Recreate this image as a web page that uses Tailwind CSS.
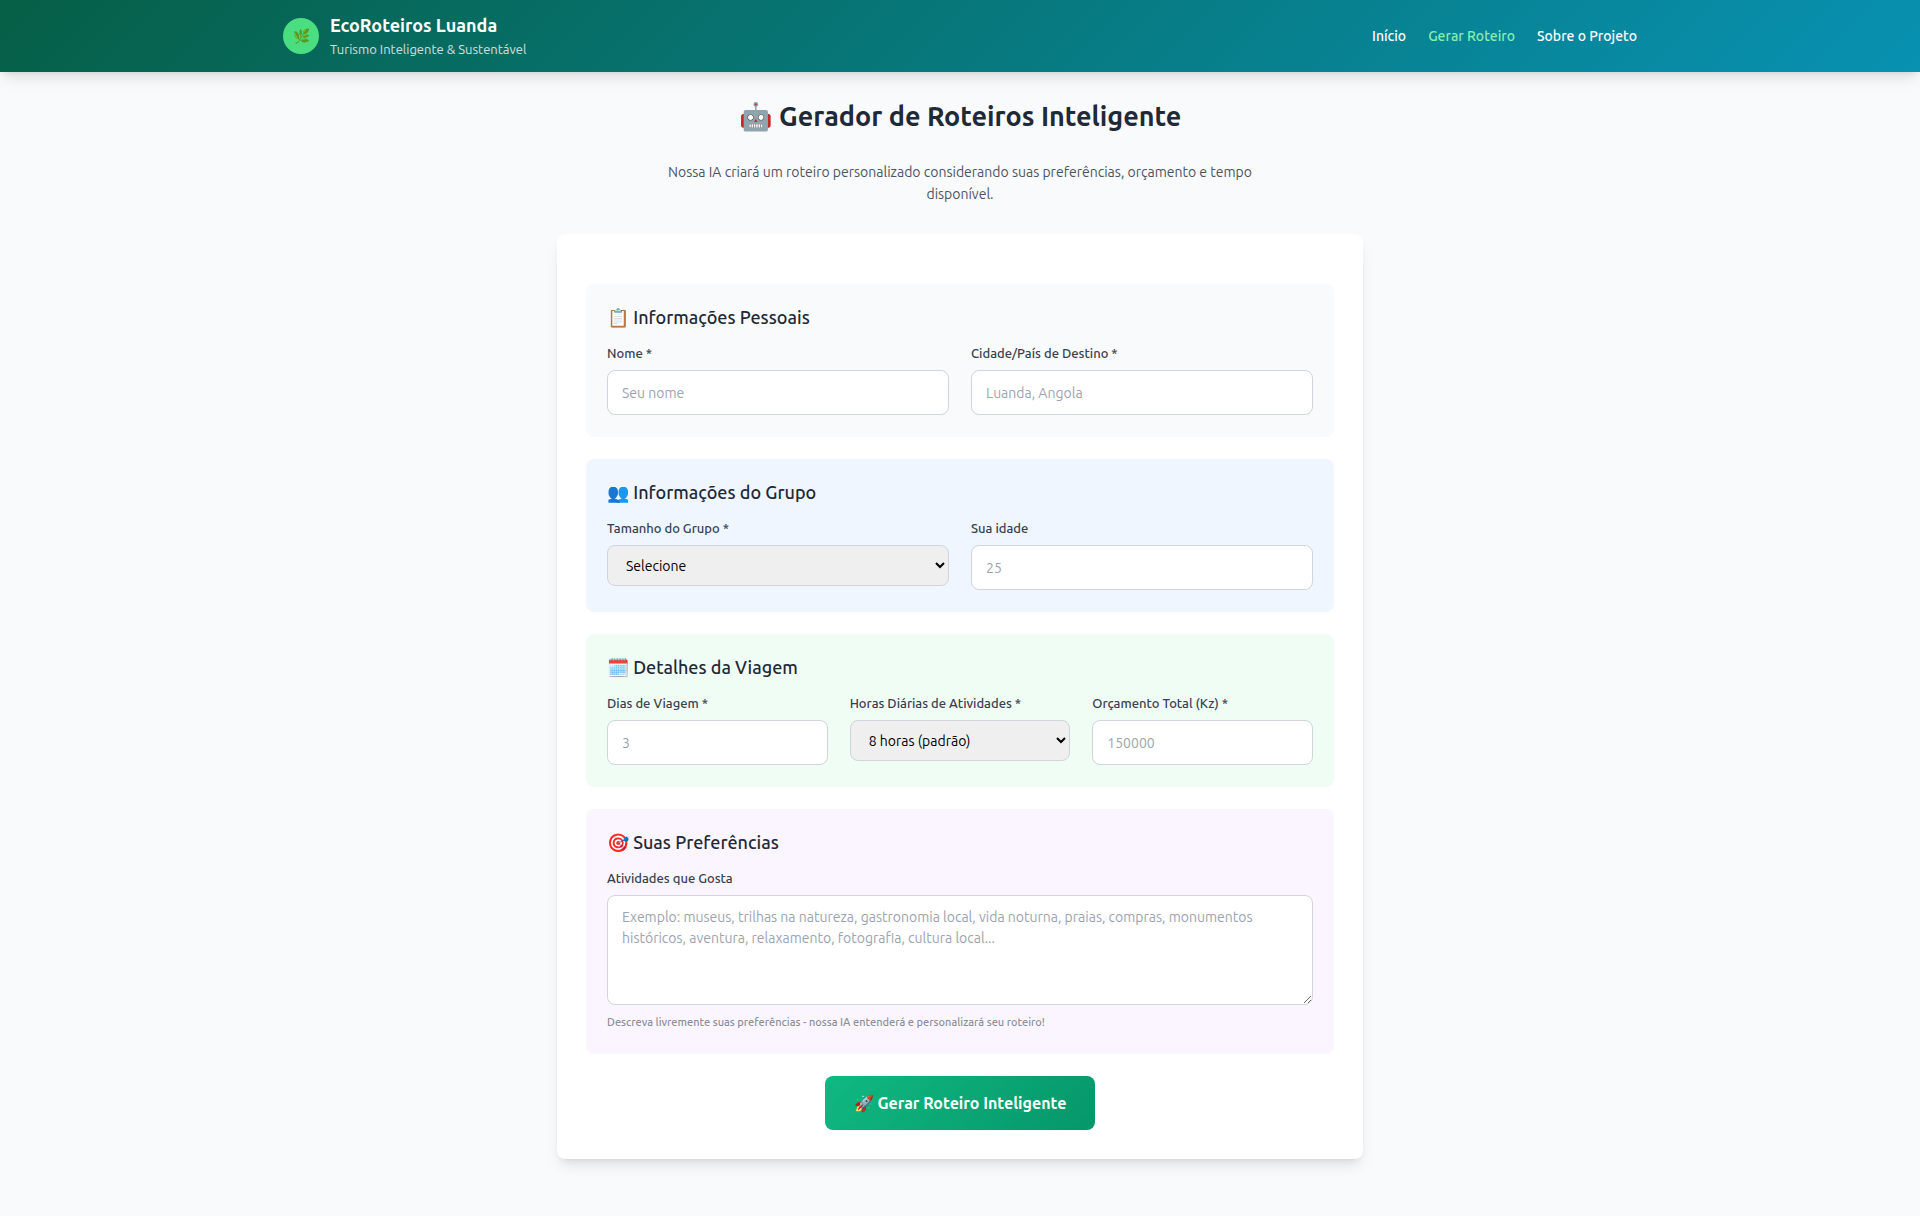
<!DOCTYPE html>
<html lang="pt">
<head>
<meta charset="utf-8">
<meta name="viewport" content="width=device-width, initial-scale=1">
<title>EcoRoteiros Luanda</title>
<script src="https://cdn.jsdelivr.net/npm/@tailwindcss/browser@4"></script>
</head>
<body class="min-h-screen bg-[#f9fafb] font-['Ubuntu','Noto_Sans',sans-serif] text-sm leading-[22px] text-[#1f2937]">
<header class="bg-[linear-gradient(135deg,#065f46,#0891b2)] text-white shadow-[0_9px_14px_-3px_rgba(0,0,0,0.1),0_4px_6px_-4px_rgba(0,0,0,0.1)]">
  <div class="mx-auto flex h-18 max-w-[1382px] items-center justify-between px-3.5">
    <div class="flex items-center gap-[11px]">
      <div class="flex size-9 items-center justify-center rounded-full bg-[#4ade80] text-sm">🌿</div>
      <div>
        <h1 class="text-lg leading-[25px] font-semibold">EcoRoteiros Luanda</h1>
        <p class="text-[13px] leading-[22px] opacity-80">Turismo Inteligente &amp; Sustentável</p>
      </div>
    </div>
    <nav class="flex gap-[22px] font-medium">
      <a href="#">Início</a>
      <a href="#" class="text-[#86efac]">Gerar Roteiro</a>
      <a href="#">Sobre o Projeto</a>
    </nav>
  </div>
</header>
<main class="mx-auto max-w-[834px] px-3.5 pt-7 pb-14">
  <div class="mb-[29px] text-center">
    <h2 class="mb-[29px] text-[27px] leading-8 font-semibold">🤖 Gerador de Roteiros Inteligente</h2>
    <p class="mx-auto max-w-[605px] text-[#4b5563]">Nossa IA criará um roteiro personalizado considerando suas preferências, orçamento e tempo disponível.</p>
  </div>
  <form class="flex flex-col gap-[22px] rounded-lg bg-white px-[29px] pt-[50px] pb-[29px] shadow-[0_9px_14px_-3px_rgba(0,0,0,0.1),0_4px_6px_-4px_rgba(0,0,0,0.1)]">
    <section class="rounded-lg bg-[#f9fafb] px-[21px] py-[22px]">
      <h3 class="mb-4 text-lg leading-[22px] font-medium">📋 Informações Pessoais</h3>
      <div class="grid grid-cols-2 items-start gap-[22px]">
        <div>
          <label for="nome" class="mb-2 block text-[13px] leading-[18px] font-medium text-[#374151]">Nome *</label>
          <input id="nome" type="text" placeholder="Seu nome" class="block h-[45px] w-full rounded-lg border border-[#d1d5db] bg-white px-3.5 placeholder:text-[#9ca3af]">
        </div>
        <div>
          <label for="destino" class="mb-2 block text-[13px] leading-[18px] font-medium text-[#374151]">Cidade/País de Destino *</label>
          <input id="destino" type="text" placeholder="Luanda, Angola" class="block h-[45px] w-full rounded-lg border border-[#d1d5db] bg-white px-3.5 placeholder:text-[#9ca3af]">
        </div>
      </div>
    </section>
    <section class="rounded-lg bg-[#eff6ff] px-[21px] py-[22px]">
      <h3 class="mb-4 text-lg leading-[22px] font-medium">👥 Informações do Grupo</h3>
      <div class="grid grid-cols-2 items-start gap-[22px]">
        <div>
          <label for="grupo" class="mb-2 block text-[13px] leading-[18px] font-medium text-[#374151]">Tamanho do Grupo *</label>
          <select id="grupo" class="block h-[41px] w-full rounded-lg border border-[#d1d5db] bg-[#efefef] px-3.5 text-black"><option>Selecione</option></select>
        </div>
        <div>
          <label for="idade" class="mb-2 block text-[13px] leading-[18px] font-medium text-[#374151]">Sua idade</label>
          <input id="idade" type="number" placeholder="25" class="block h-[45px] w-full rounded-lg border border-[#d1d5db] bg-white px-3.5 placeholder:text-[#9ca3af]">
        </div>
      </div>
    </section>
    <section class="rounded-lg bg-[#f0fdf4] px-[21px] py-[22px]">
      <h3 class="mb-4 text-lg leading-[22px] font-medium">🗓️ Detalhes da Viagem</h3>
      <div class="grid grid-cols-3 items-start gap-[22px]">
        <div>
          <label for="dias" class="mb-2 block text-[13px] leading-[18px] font-medium text-[#374151]">Dias de Viagem *</label>
          <input id="dias" type="number" placeholder="3" class="block h-[45px] w-full rounded-lg border border-[#d1d5db] bg-white px-3.5 placeholder:text-[#9ca3af]">
        </div>
        <div>
          <label for="horas" class="mb-2 block text-[13px] leading-[18px] font-medium text-[#374151]">Horas Diárias de Atividades *</label>
          <select id="horas" class="block h-[41px] w-full rounded-lg border border-[#d1d5db] bg-[#efefef] px-3.5 text-black"><option>8 horas (padrão)</option></select>
        </div>
        <div>
          <label for="orcamento" class="mb-2 block text-[13px] leading-[18px] font-medium text-[#374151]">Orçamento Total (Kz) *</label>
          <input id="orcamento" type="number" placeholder="150000" class="block h-[45px] w-full rounded-lg border border-[#d1d5db] bg-white px-3.5 placeholder:text-[#9ca3af]">
        </div>
      </div>
    </section>
    <section class="rounded-lg bg-[#faf5ff] px-[21px] py-[22px]">
      <h3 class="mb-4 text-lg leading-[22px] font-medium">🎯 Suas Preferências</h3>
      <label for="preferencias" class="mb-2 block text-[13px] leading-[18px] font-medium text-[#374151]">Atividades que Gosta</label>
      <textarea id="preferencias" placeholder="Exemplo: museus, trilhas na natureza, gastronomia local, vida noturna, praias, compras, monumentos históricos, aventura, relaxamento, fotografia, cultura local..." class="block h-[110px] w-full rounded-lg border border-[#d1d5db] bg-white px-3.5 py-[11px] leading-[21px] placeholder:text-[#9ca3af]"></textarea>
      <p class="mt-[7px] text-[11px] leading-5 font-medium text-[#6b7280]/80">Descreva livremente suas preferências - nossa IA entenderá e personalizará seu roteiro!</p>
    </section>
    <button type="submit" class="self-center rounded-lg bg-[linear-gradient(135deg,#10b981,#059669)] px-[29px] py-3.5 text-base leading-[26px] font-semibold text-white">🚀 Gerar Roteiro Inteligente</button>
  </form>
</main>
</body>
</html>
